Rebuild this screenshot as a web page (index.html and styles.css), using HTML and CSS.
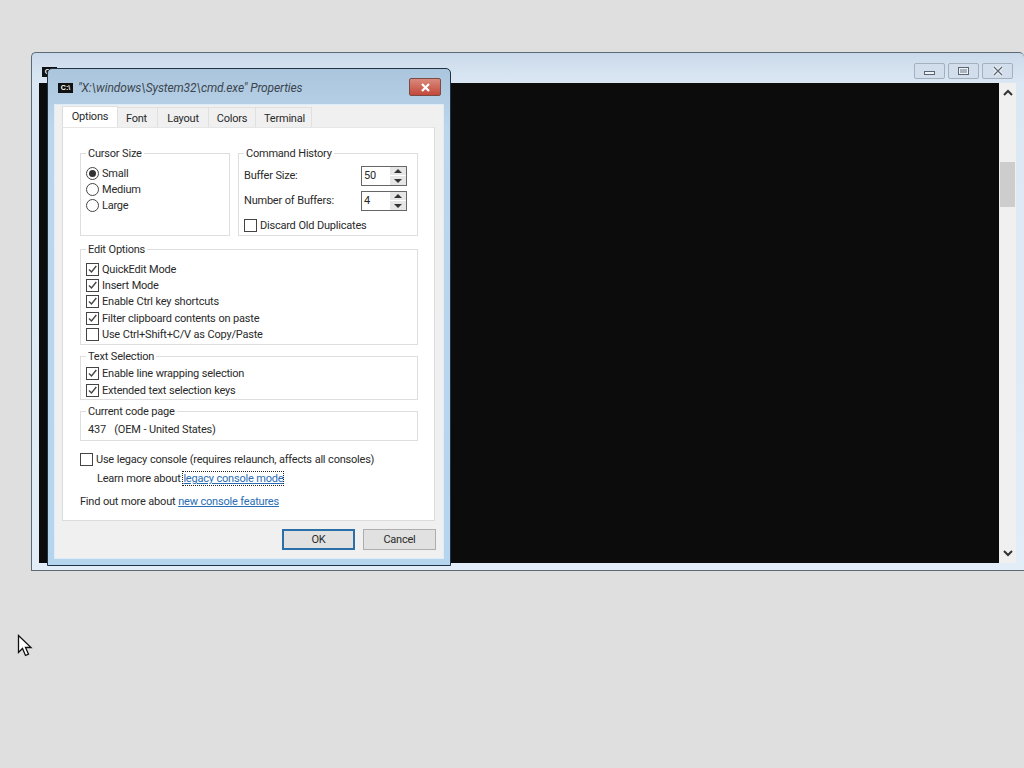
FILE: index.html
```html
<!DOCTYPE html>
<html>
<head>
    <link rel="stylesheet" href="styles.css">
</head>
<body>
    <div class="console">
        <div class="console-title">
            <span class="cmd-icon console-icon">C:\</span>
            <div class="caption-btns">
                <div class="caption-btn"><span class="min-glyph"></span></div>
                <div class="caption-btn"><span class="max-glyph"></span></div>
                <div class="caption-btn close-glyph">
                    <svg width="12" height="10" viewBox="0 0 12 10"><path d="M2 1l8 8M10 1l-8 8" fill="none" stroke="#eef2f6" stroke-width="3.4"/><path d="M2 1l8 8M10 1l-8 8" fill="none" stroke="#5c6670" stroke-width="1.2"/></svg>
                </div>
            </div>
        </div>
        <div class="console-client">
            <div class="console-screen"></div>
            <div class="scrollbar">
                <svg class="scroll-arrow" width="10" height="7" viewBox="0 0 10 7"><path d="M1 6l4-4 4 4" fill="none" stroke="#333" stroke-width="2"/></svg>
                <div class="scroll-track"><div class="scroll-thumb"></div></div>
                <svg class="scroll-arrow" width="10" height="7" viewBox="0 0 10 7"><path d="M1 1l4 4 4-4" fill="none" stroke="#333" stroke-width="2"/></svg>
            </div>
        </div>
    </div>

    <div class="dialog">
        <div class="dialog-title">
            <span class="cmd-icon">C:\</span>
            <span class="dialog-caption">"X:\windows\System32\cmd.exe" Properties</span>
            <div class="dialog-close">
                <svg width="11" height="9" viewBox="0 0 11 9"><path d="M2 1l7 7M9 1l-7 7" fill="none" stroke="#fff" stroke-width="2.2"/></svg>
            </div>
        </div>
        <div class="dialog-body">
            <div class="tabs">
                <div class="tab tab-active">Options</div>
                <div class="tab tab-font">Font</div>
                <div class="tab tab-layout">Layout</div>
                <div class="tab tab-colors">Colors</div>
                <div class="tab tab-terminal">Terminal</div>
            </div>
            <div class="panel">
                <div class="top-groups">
                    <fieldset class="group group-cursor">
                        <legend>Cursor Size</legend>
                        <div class="row"><span class="radio radio-on"></span>Small</div>
                        <div class="row"><span class="radio"></span>Medium</div>
                        <div class="row"><span class="radio"></span>Large</div>
                    </fieldset>
                    <fieldset class="group group-history">
                        <legend>Command History</legend>
                        <div class="spin-row">
                            <span>Buffer Size:</span>
                            <div class="spinner"><span class="spin-value">50</span><div class="spin-btns"><span class="spin-up"></span><span class="spin-down"></span></div></div>
                        </div>
                        <div class="spin-row">
                            <span>Number of Buffers:</span>
                            <div class="spinner"><span class="spin-value">4</span><div class="spin-btns"><span class="spin-up"></span><span class="spin-down"></span></div></div>
                        </div>
                        <div class="row discard-row"><span class="check"></span>Discard Old Duplicates</div>
                    </fieldset>
                </div>
                <fieldset class="group group-edit">
                    <legend>Edit Options</legend>
                    <div class="row"><span class="check check-on"></span>QuickEdit Mode</div>
                    <div class="row"><span class="check check-on"></span>Insert Mode</div>
                    <div class="row"><span class="check check-on"></span>Enable Ctrl key shortcuts</div>
                    <div class="row"><span class="check check-on"></span>Filter clipboard contents on paste</div>
                    <div class="row"><span class="check"></span>Use Ctrl+Shift+C/V as Copy/Paste</div>
                </fieldset>
                <fieldset class="group group-select">
                    <legend>Text Selection</legend>
                    <div class="row"><span class="check check-on"></span>Enable line wrapping selection</div>
                    <div class="row"><span class="check check-on"></span>Extended text selection keys</div>
                </fieldset>
                <fieldset class="group group-code">
                    <legend>Current code page</legend>
                    <div class="code-text">437&nbsp;&nbsp;&nbsp;(OEM - United States)</div>
                </fieldset>
                <div class="legacy-row"><span class="check"></span>Use legacy console (requires relaunch, affects all consoles)</div>
                <div class="learn-row">Learn more about <a class="link link-focus">legacy console mode</a></div>
                <div class="find-row">Find out more about <a class="link">new console features</a></div>
            </div>
            <div class="dialog-buttons">
                <div class="btn btn-default">OK</div>
                <div class="btn">Cancel</div>
            </div>
        </div>
    </div>

    <svg class="cursor" width="16" height="24" viewBox="0 0 16 24">
        <path d="M1.5 1.5v17l4-4 3 7 3-1.3-3-6.7h5.5z" fill="#fff" stroke="#111" stroke-width="1.3"/>
    </svg>
</body>
</html>
```

FILE: styles.css
```css
html, body {
    margin: 0;
    height: 100%;
}
body {
    position: relative;
    width: 1024px;
    height: 768px;
    overflow: hidden;
    background-color: #dfdfdf;
    font-family: Roboto, "Liberation Sans", sans-serif;
    font-size: 11px;
    letter-spacing: -0.22px;
    word-spacing: 0.3px;
    color: #2a2a2a;
}

/* console window behind the dialog */
.console {
    position: absolute;
    left: 31px;
    top: 52px;
    width: 993px;
    height: 519px;
    box-sizing: border-box;
    border: 1px solid #5d6a76;
    border-right: 0;
    border-radius: 5px 5px 0 0;
    background: linear-gradient(#cbdaea, #dbe7f3 30px, #e2edf7);
    padding: 0 8px 7px 7px;
    display: flex;
    flex-direction: column;
}
.console-title {
    height: 30px;
    flex: none;
    display: flex;
    align-items: flex-start;
    justify-content: space-between;
}
.cmd-icon {
    display: inline-block;
    width: 15px;
    height: 10px;
    flex: none;
    background-color: #111;
    color: #fff;
    font-family: "Liberation Sans", sans-serif;
    font-size: 7px;
    font-weight: bold;
    line-height: 10px;
    letter-spacing: 0;
    text-align: center;
    overflow: hidden;
}
.console-icon {
    margin: 14px 0 0 3px;
}
.caption-btns {
    display: flex;
    gap: 3px;
    margin: 10px 3px 0 0;
}
.caption-btn {
    width: 31px;
    height: 16px;
    box-sizing: border-box;
    border: 1px solid #a3b0bd;
    border-radius: 2px;
    background-color: #d2deeb;
    display: flex;
    align-items: center;
    justify-content: center;
}
.min-glyph {
    width: 9px;
    height: 2px;
    margin-top: 3px;
    border: 1px solid #5c6670;
    background-color: #eef2f6;
}
.max-glyph {
    width: 7px;
    height: 4px;
    border: 2px solid #eef2f6;
    outline: 1px solid #5c6670;
    outline-offset: -1px;
    background-color: #aab4bf;
}
.console-client {
    flex: 1;
    display: flex;
}
.console-screen {
    flex: 1;
    background-color: #0c0c0c;
}
.scrollbar {
    width: 17px;
    background-color: #f0f0f0;
    display: flex;
    flex-direction: column;
    align-items: center;
}
.scroll-arrow {
    flex: none;
    margin: 6px 0;
}
.scroll-track {
    flex: 1;
    width: 100%;
}
.scroll-thumb {
    width: 15px;
    height: 45px;
    margin: 60px 0 0 1px;
    background-color: #cdcdcd;
}

/* properties dialog */
.dialog {
    position: absolute;
    left: 47px;
    top: 68px;
    width: 404px;
    height: 498px;
    box-sizing: border-box;
    border: 1px solid #1f3346;
    border-radius: 5px 5px 0 0;
    background: linear-gradient(#aac5dc, #bcd6ec 60px, #b5d5ee);
    display: flex;
    flex-direction: column;
}
.dialog-title {
    height: 36px;
    flex: none;
    display: flex;
    align-items: flex-start;
    padding: 9px 9px 0 10px;
    box-sizing: border-box;
}
.dialog-title .cmd-icon {
    margin-top: 5px;
}
.dialog-caption {
    flex: 1;
    margin-left: 5px;
    margin-top: 2px;
    font-style: italic;
    font-size: 12px;
    letter-spacing: -0.14px;
    word-spacing: 0;
    line-height: 16px;
    color: #3c4650;
}
.dialog-close {
    width: 32px;
    height: 18px;
    box-sizing: border-box;
    border: 1px solid #7c4a44;
    border-radius: 2px;
    background: linear-gradient(#d98a7c, #c2483a);
    display: flex;
    align-items: center;
    justify-content: center;
}
.dialog-body {
    flex: 1;
    margin: 0 7px 7px;
    padding: 1px 8px 0 7px;
    background-color: #f0f0f0;
    box-shadow: 0 0 0 1px #dcecf8;
}
.tabs {
    display: flex;
    align-items: flex-end;
    height: 21px;
}
.tab {
    height: 20px;
    box-sizing: border-box;
    border: 1px solid #e0e0e0;
    border-bottom: 0;
    border-left: 0;
    background-color: #f0f0f0;
    line-height: 21px;
    text-align: center;
}
.tab-active {
    width: 56px;
    height: 21px;
    background-color: #fff;
    border-left: 1px solid #dcdcdc;
    line-height: 19px;
}
.tab-font { width: 40px; padding-right: 2px; }
.tab-layout { width: 51px; }
.tab-colors { width: 47px; }
.tab-terminal { width: 56px; padding-left: 2px; }
.panel {
    height: 394px;
    box-sizing: border-box;
    border: 1px solid #dcdcdc;
    border-top-color: #e6e6e6;
    background-color: #fff;
    padding: 18px 16px 0 17px;
}

/* group boxes */
.group {
    margin: 0;
    min-width: 0;
    box-sizing: border-box;
    border: 1px solid #dedede;
    padding: 0 6px;
}
.group legend {
    padding: 1px 2px 0;
    margin-left: 0;
    line-height: 14px;
}
.top-groups {
    display: flex;
    gap: 8px;
}
.group-cursor {
    width: 150px;
    height: 90px;
    padding-top: 4px;
    padding-left: 5px;
}
.group-history {
    width: 180px;
    height: 90px;
    padding-top: 2px;
    padding-left: 5px;
}
.group-edit {
    height: 103px;
    margin-top: 6px;
    padding-top: 4px;
    padding-left: 5px;
}
.group-select {
    height: 51px;
    margin-top: 4px;
    padding-top: 1.5px;
    padding-left: 5px;
}
.group-code {
    height: 37px;
    margin-top: 4px;
    padding-left: 5px;
}
.row {
    height: 16.4px;
    display: flex;
    align-items: center;
    white-space: nowrap;
}
.radio, .check {
    width: 13px;
    height: 13px;
    flex: none;
    box-sizing: border-box;
    border: 1px solid #444;
    margin-right: 3px;
    background-color: #fff;
    display: inline-block;
}
.radio {
    border-radius: 50%;
    position: relative;
}
.radio-on::after {
    content: "";
    position: absolute;
    left: 2px;
    top: 2px;
    width: 7px;
    height: 7px;
    border-radius: 50%;
    background-color: #333;
}
.check-on {
    background: #fff url("data:image/svg+xml,%3Csvg xmlns='http://www.w3.org/2000/svg' width='11' height='11'%3E%3Cpath d='M2 5.5l2.5 2.5 4.8-6' fill='none' stroke='%23444' stroke-width='1.4'/%3E%3C/svg%3E") no-repeat center;
}
.spin-row {
    height: 25px;
    display: flex;
    align-items: center;
    justify-content: space-between;
    padding-right: 4px;
}
.spinner {
    width: 46px;
    height: 20px;
    box-sizing: border-box;
    border: 1px solid #666;
    display: flex;
    justify-content: space-between;
    line-height: 18px;
    padding-left: 2px;
}
.spin-btns {
    width: 16px;
    display: flex;
    flex-direction: column;
    gap: 1px;
    background-color: #fff;
}
.spin-up, .spin-down {
    flex: 1;
    background-color: #e6e6e6;
    position: relative;
}
.spin-up::after, .spin-down::after {
    content: "";
    position: absolute;
    left: 4px;
    border-left: 4px solid transparent;
    border-right: 4px solid transparent;
}
.spin-up::after {
    top: 2px;
    border-bottom: 4px solid #333;
}
.spin-down::after {
    top: 3px;
    border-top: 4px solid #333;
}
.discard-row {
    margin-top: 4px;
}
.code-text {
    line-height: 16px;
    margin: 3px 0 0 2px;
}
.legacy-row {
    display: flex;
    align-items: center;
    margin-top: 10px;
    height: 16px;
}
.legacy-row .check {
    margin-right: 3px;
}
.learn-row {
    margin: 4px 0 0 17px;
    line-height: 16px;
}
.find-row {
    margin-top: 7px;
    line-height: 16px;
}
.link {
    color: #2a6db5;
    text-decoration: underline;
}
.link-focus {
    outline: 1px dotted #222;
}
.dialog-buttons {
    display: flex;
    justify-content: flex-end;
    gap: 8px;
    margin-top: 8px;
    margin-right: -1px;
}
.btn {
    width: 73px;
    height: 21px;
    box-sizing: border-box;
    border: 1px solid #adadad;
    background-color: #e1e1e1;
    line-height: 19px;
    text-align: center;
}
.btn-default {
    border: 2px solid #2a6fa8;
    line-height: 17px;
}
.cursor {
    position: absolute;
    left: 17px;
    top: 634px;
}
```
